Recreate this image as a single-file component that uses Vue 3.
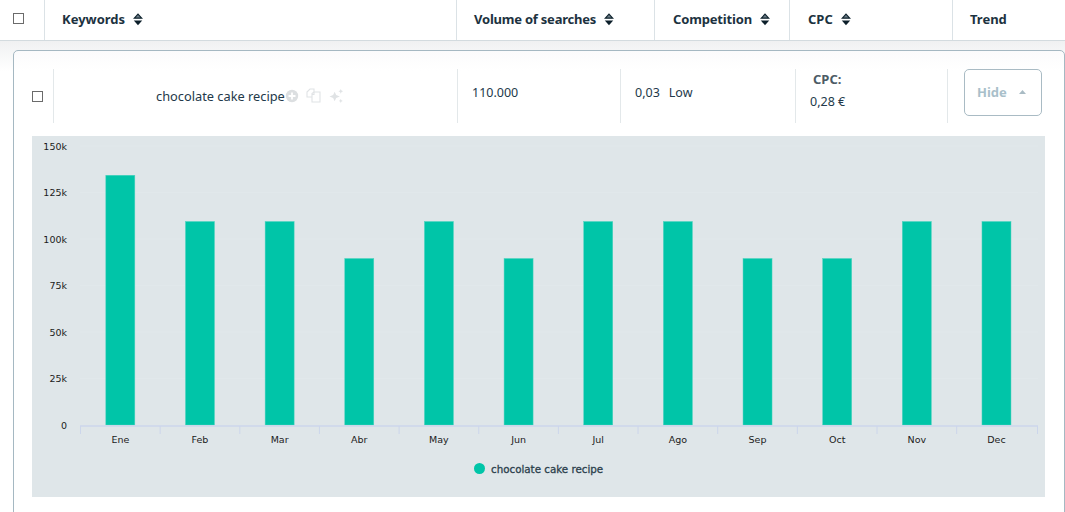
<script setup>
const headers = [
  { label: 'Keywords', cls: 'h-key', sort: true },
  { label: 'Volume of searches', cls: 'h-vol', sort: true },
  { label: 'Competition', cls: 'h-comp', sort: true },
  { label: 'CPC', cls: 'h-cpc', sort: true },
  { label: 'Trend', cls: 'h-trend', sort: false },
]
const yTicks = [
  { label: '150k', y: 146 },
  { label: '125k', y: 192.5 },
  { label: '100k', y: 239 },
  { label: '75k', y: 285.5 },
  { label: '50k', y: 332 },
  { label: '25k', y: 378.5 },
  { label: '0', y: 425 },
]
const months = [
  ['Ene', 135], ['Feb', 110], ['Mar', 110], ['Abr', 90], ['May', 110], ['Jun', 90],
  ['Jul', 110], ['Ago', 110], ['Sep', 90], ['Oct', 90], ['Nov', 110], ['Dec', 110],
]
const ox = 32
const oy = 136
const step = 79.65
const bars = months.map(([label, v], i) => ({
  label,
  x: 80.5 + step * i + step / 2 - ox,
  h: v * 1.85,
  tick: 80 + step * i - ox,
}))
</script>

<template>
  <div class="page">
    <div class="head">
      <div class="h-check"><span class="box"></span></div>
      <div v-for="h in headers" :key="h.label" class="hcell" :class="h.cls">
        <span>{{ h.label }}</span>
        <svg v-if="h.sort" class="sort" width="10" height="13" viewBox="0 0 10 13">
          <path d="M5 1.200 8.700 5.200H1.300Z" fill="#6f7f89" stroke="#10242f" stroke-width="1.200" />
          <path d="M.8 7.500h8.400L5 12.300Z" fill="#0c1f2a" />
        </svg>
      </div>
    </div>
    <div class="shadow">
      <div class="card">
        <div class="row">
          <div class="r-check"><span class="box"></span></div>
          <div class="r-key">
            <span class="kw">chocolate cake recipe</span>
            <svg class="ic-plus" width="14" height="14" viewBox="0 0 14 14">
              <circle cx="7" cy="7" r="6.200" fill="#dcdfe1" />
              <path d="M7 3.500v7M3.500 7h7" stroke="#fff" stroke-width="1.800" />
            </svg>
            <svg class="ic-copy" width="15" height="15" viewBox="0 0 15 15" fill="none" stroke="#e0e3e5" stroke-width="1.100">
              <path d="M1 4 4 1h4v8H1Z" />
              <path d="M6 5.500 8 4H14V14H6Z" fill="#fff" />
              <path d="M8 4v2.500H6" />
            </svg>
            <svg class="ic-spark" width="16" height="16" viewBox="0 0 17 17" fill="#e0e3e5">
              <path d="M6 4 7.600 7.400 11.500 9 7.600 10.600 6 14 4.400 10.600 .5 9 4.400 7.400Z" />
              <path d="M12.500 1 13.300 2.700 15 3.500 13.300 4.300 12.500 6 11.700 4.300 10 3.500 11.700 2.700Z" />
              <path d="M12.500 11.500 13.200 13 14.700 13.700 13.200 14.400 12.500 16 11.800 14.400 10.300 13.700 11.800 13Z" />
            </svg>
          </div>
          <div class="r-vol">110.000</div>
          <div class="r-comp"><span>0,03</span><span>Low</span></div>
          <div class="r-cpc"><b>CPC:</b><span>0,28 €</span></div>
          <div class="r-trend">
            <button class="hide">
              <span>Hide</span>
              <svg width="7" height="4" viewBox="0 0 7 4"><path d="M3.500 0 7 4H0Z" fill="#a9bbc4" /></svg>
            </button>
          </div>
        </div>
        <svg class="chart" width="1013" height="361" viewBox="0 0 1013 361">
          <rect width="1013" height="361" fill="#dfe6e9" />
          <g v-for="t in yTicks" :key="t.label">
            <line v-if="t.label !== '0'" x1="48" x2="1006" :y1="t.y - oy" :y2="t.y - oy" stroke="#e1e8eb" stroke-width="1" />
            <text class="axis" x="35" :y="t.y - oy + 3.500" text-anchor="end">{{ t.label }}</text>
          </g>
          <g v-for="b in bars" :key="b.label">
            <rect :x="b.x - 14.500" :y="289 - b.h" width="29" :height="b.h" fill="#00c5a8" stroke="#4fd3bf" stroke-width="0.500" />
            <line :x1="b.tick + 0.500" :x2="b.tick + 0.500" y1="290" y2="298" stroke="#ccd6eb" />
            <text class="axis" :x="b.x" y="307" text-anchor="middle">{{ b.label }}</text>
          </g>
          <line x1="48" x2="1006" y1="290" y2="290" stroke="#ccd6eb" stroke-width="1.500" />
          <line x1="1005.500" x2="1005.500" y1="290" y2="298" stroke="#ccd6eb" />
          <circle cx="447.500" cy="332.500" r="5.500" fill="#00c5a8" />
          <text class="legend" x="459" y="337">chocolate cake recipe</text>
        </svg>
      </div>
    </div>
  </div>
</template>

<style scoped>
.page {
  width: 1065px;
  height: 512px;
  overflow: hidden;
  background: #fff;
  font-family: "Noto Sans", "Open Sans", sans-serif;
  color: #1f3341;
}
.head {
  display: flex;
  height: 40px;
  border-bottom: 1px solid #d3dbdf;
  box-sizing: content-box;
}
.h-check {
  width: 44px;
  display: flex;
  align-items: center;
  padding: 0 0 3px 13px;
  box-sizing: border-box;
}
.box {
  display: block;
  width: 9px;
  height: 9px;
  border: 1px solid #6b6b6b;
  background: #fff;
}
.hcell {
  display: flex;
  align-items: center;
  gap: 8px;
  box-sizing: border-box;
  border-left: 1px solid #dbe2e6;
  padding-bottom: 2px;
  font-size: 13px;
  font-weight: 700;
  color: #1c3240;
}
.h-key { width: 412px; padding-left: 17px; }
.h-vol { width: 198px; padding-left: 17px; letter-spacing: -0.22px; }
.h-comp { width: 135px; padding-left: 18px; letter-spacing: -0.15px; }
.h-cpc { width: 163px; padding-left: 18px; }
.h-trend { flex: 1; padding-left: 17px; }
.shadow {
  padding: 9px 0 0 13px;
  background: linear-gradient(#f0f1f2, #fff 30px);
}
.card {
  box-sizing: border-box;
  height: 480px;
  border: 1px solid #a5b8c2;
  border-radius: 5px;
  background: linear-gradient(#fbfbfc, #fff 20px);
  padding: 18px 0 0 18px;
}
.row {
  display: flex;
  height: 54px;
  margin: 0 0 13px 1px;
  font-size: 12.500px;
  color: #23394a;
}
.r-check {
  width: 21px;
  margin-left: -1px;
  display: flex;
  align-items: center;
  padding-top: 1px;
  box-sizing: border-box;
}
.r-key, .r-vol, .r-comp, .r-cpc, .r-trend {
  box-sizing: border-box;
  border-left: 1px solid #e3e8ea;
}
.r-key {
  width: 404px;
  display: flex;
  align-items: center;
  padding: 0 0 1px 102px;
  font-size: 12.800px;
}
.kw { white-space: nowrap; }
.ic-copy { margin-left: 7px; }
.ic-spark { margin-left: 8px; }
.r-vol {
  width: 163px;
  padding: 15px 0 0 14px;
}
.r-comp {
  width: 175px;
  padding: 15px 0 0 14px;
  display: flex;
  gap: 9px;
  align-items: flex-start;
}
.r-cpc {
  width: 152px;
  padding: 1px 0 0 14px;
  display: flex;
  flex-direction: column;
  gap: 5px;
}
.r-cpc b {
  padding-left: 3px;
  font-size: 13px;
  font-weight: 700;
  color: #4d5b66;
}
.r-trend {
  flex: 1;
  padding-left: 16px;
}
.hide {
  width: 78px;
  height: 47px;
  box-sizing: border-box;
  border: 1px solid #a9bbc4;
  border-radius: 5px;
  background: #fff;
  display: flex;
  align-items: center;
  gap: 12px;
  padding: 0 0 2px 12px;
  font: 700 13px "Noto Sans", sans-serif;
  color: #a9bfca;
}
.chart { display: block; }
.axis {
  font-family: "DejaVu Sans", sans-serif;
  font-size: 9.500px;
  fill: #1b1b1b;
}
.legend {
  font-family: "DejaVu Sans", sans-serif;
  font-size: 10.300px;
  fill: #2b3f4c;
  stroke: #2b3f4c;
  stroke-width: 0.3px;
}
</style>
